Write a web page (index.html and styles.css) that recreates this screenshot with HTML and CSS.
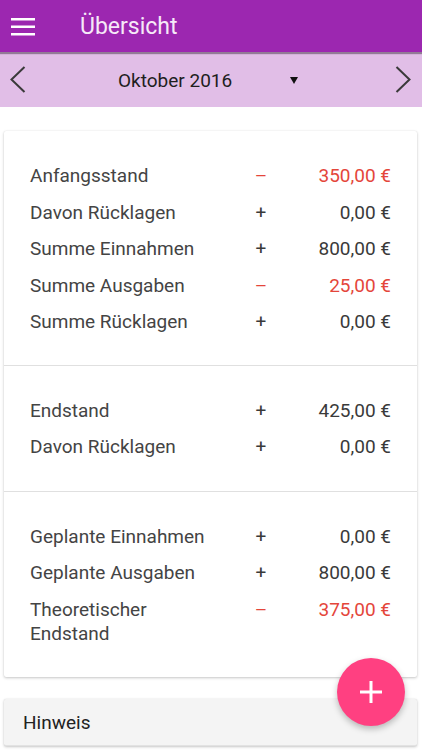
FILE: index.html
```html
<!DOCTYPE html>
<html lang="de">
<head>
    <meta charset="UTF-8">
    <meta name="viewport" content="width=device-width, initial-scale=1.0">
    <title>Übersicht</title>
    <link rel="stylesheet" href="styles.css">
</head>
<body>

<header class="appbar">
    <button class="menu-btn" aria-label="Menü">
        <svg width="24" height="18" viewBox="0 0 24 18">
            <rect x="0" y="0" width="24" height="2.5" fill="#fff"/>
            <rect x="0" y="7.5" width="24" height="2.5" fill="#fff"/>
            <rect x="0" y="15" width="24" height="2.5" fill="#fff"/>
        </svg>
    </button>
    <h1 class="appbar-title">Übersicht</h1>
</header>

<div class="monthbar">
    <button class="nav-btn nav-prev" aria-label="Vorheriger Monat">
        <svg width="16" height="27" viewBox="0 0 16 27">
            <polyline points="14.5,1 1.5,13.5 14.5,26" fill="none" stroke="#3a3a3a" stroke-width="2"/>
        </svg>
    </button>
    <div class="month-select">
        <span class="month-label">Oktober 2016</span>
        <svg class="month-arrow" width="8" height="7" viewBox="0 0 8 7">
            <polygon points="0,0 8,0 4,7" fill="#111"/>
        </svg>
    </div>
    <button class="nav-btn nav-next" aria-label="Nächster Monat">
        <svg width="16" height="27" viewBox="0 0 16 27">
            <polyline points="1.5,1 14.5,13.5 1.5,26" fill="none" stroke="#3a3a3a" stroke-width="2"/>
        </svg>
    </button>
</div>

<main class="content">
    <section class="card summary">
        <div class="group">
            <div class="row neg"><span class="label">Anfangsstand</span><span class="sign">–</span><span class="amount">350,00 €</span></div>
            <div class="row"><span class="label">Davon Rücklagen</span><span class="sign">+</span><span class="amount">0,00 €</span></div>
            <div class="row"><span class="label">Summe Einnahmen</span><span class="sign">+</span><span class="amount">800,00 €</span></div>
            <div class="row neg"><span class="label">Summe Ausgaben</span><span class="sign">–</span><span class="amount">25,00 €</span></div>
            <div class="row"><span class="label">Summe Rücklagen</span><span class="sign">+</span><span class="amount">0,00 €</span></div>
        </div>
        <div class="group">
            <div class="row"><span class="label">Endstand</span><span class="sign">+</span><span class="amount">425,00 €</span></div>
            <div class="row"><span class="label">Davon Rücklagen</span><span class="sign">+</span><span class="amount">0,00 €</span></div>
        </div>
        <div class="group">
            <div class="row"><span class="label">Geplante Einnahmen</span><span class="sign">+</span><span class="amount">0,00 €</span></div>
            <div class="row"><span class="label">Geplante Ausgaben</span><span class="sign">+</span><span class="amount">800,00 €</span></div>
            <div class="row neg"><span class="label">Theoretischer Endstand</span><span class="sign">–</span><span class="amount">375,00 €</span></div>
        </div>
    </section>

    <section class="card hint">
        <div class="hint-title">Hinweis</div>
    </section>
</main>

<button class="fab" aria-label="Hinzufügen">
    <svg width="22" height="22" viewBox="0 0 22 22">
        <rect x="9.5" y="0" width="3" height="22" fill="#fff"/>
        <rect x="0" y="9.5" width="22" height="3" fill="#fff"/>
    </svg>
</button>

</body>
</html>
```

FILE: styles.css
```css
body {
    font-family: Roboto, "Liberation Sans", sans-serif;
    background-color: #fff;
    margin: 0;
    padding: 0;
    height: 750px;
    overflow: hidden;
}
button {
    background: none;
    border: none;
    padding: 0;
    cursor: pointer;
}
.appbar {
    position: relative;
    z-index: 2;
    height: 52px;
    background-color: #9c27b0;
    display: flex;
    align-items: center;
    box-shadow: 0 2px 1px rgba(0, 0, 0, 0.35);
}
.menu-btn {
    display: flex;
    margin-left: 11px;
    margin-top: 1px;
}
.appbar-title {
    margin: 0 0 0 45px;
    font-size: 23px;
    font-weight: 400;
    color: #f6e9f8;
}
.monthbar {
    height: 55px;
    background-color: #e1bee7;
    display: flex;
    align-items: center;
}
.nav-btn {
    width: 36px;
    display: flex;
    align-items: center;
}
.nav-prev {
    padding-left: 10px;
}
.nav-next {
    justify-content: flex-end;
    padding-right: 11px;
    width: 36px;
    box-sizing: content-box;
}
.month-select {
    flex: 1;
    display: flex;
    align-items: center;
    padding-left: 82px;
    padding-top: 1px;
}
.month-label {
    font-size: 19px;
    color: #1e1e1e;
}
.month-arrow {
    margin-left: 58px;
}
.content {
    padding: 24px 5px 0 4px;
}
.card {
    background-color: #fff;
    border-radius: 2px;
    box-shadow: 0 1px 3px rgba(0, 0, 0, 0.22), 0 0 1px rgba(0, 0, 0, 0.12);
}
.group {
    padding: 27px 26px 25px 26px;
    border-top: 1px solid #e0e0e0;
}
.group:first-child {
    border-top: none;
    padding-bottom: 24px;
}
.group:last-child {
    padding-bottom: 24px;
}
.row {
    display: grid;
    grid-template-columns: 190px 1fr 89px;
    align-items: start;
    padding: 6px 0;
    font-size: 19px;
    line-height: 24.5px;
    color: #444;
}
.sign {
    text-align: center;
    color: #3a3a3a;
}
.amount {
    text-align: right;
    color: #3a3a3a;
}
.row.neg .sign,
.row.neg .amount {
    color: #e4463b;
}
.hint {
    margin-top: 22px;
    background-color: #f4f4f4;
    border-bottom: 1px solid #e2e2e2;
}
.hint-title {
    padding: 12px 19px 11px;
    font-size: 19px;
    color: #222;
}
.fab {
    position: fixed;
    right: 17px;
    top: 658px;
    width: 68px;
    height: 68px;
    border-radius: 50%;
    background-color: #ff4081;
    display: flex;
    align-items: center;
    justify-content: center;
    box-shadow: 0 3px 6px rgba(0, 0, 0, 0.25);
    z-index: 3;
}
```
